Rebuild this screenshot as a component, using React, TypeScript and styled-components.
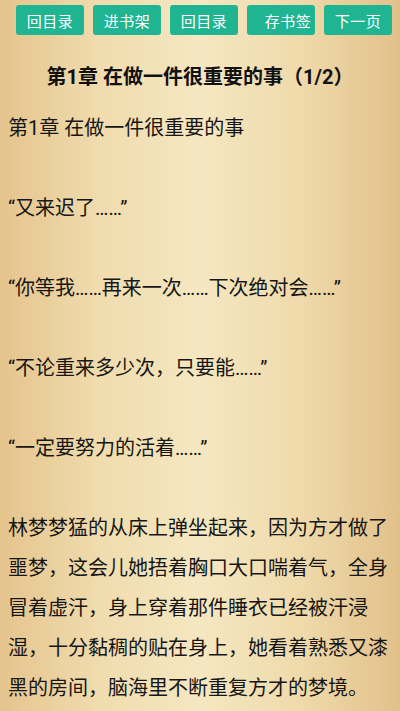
import * as React from 'react';
import styled, { createGlobalStyle } from 'styled-components';

const GlobalStyle = createGlobalStyle`
  html, body {
    margin: 0;
    padding: 0;
  }
  body {
    font-family: Roboto, "Noto Sans CJK SC", sans-serif;
    background: linear-gradient(to right, #e5c48d 0%, #f0dcae 25%, #f5e7c1 50%, #efdaab 75%, #e1c18a 100%);
    min-height: 711px;
  }
`;

const Page = styled.div`
  min-height: 711px;
  color: #161616;
`;

const Toolbar = styled.div`
  display: flex;
  gap: 9px;
  padding: 5px 0 0 16px;
`;

const NavButton = styled.div<{ $shift?: number }>`
  width: 68px;
  height: 30px;
  box-sizing: border-box;
  padding-left: ${(p) => (p.$shift ? p.$shift * 2 : 0)}px;
  display: flex;
  align-items: center;
  justify-content: center;
  background: #1fb593;
  border-radius: 3px;
  color: #fff;
  font-size: 15px;
  letter-spacing: 0.5px;
`;

const Title = styled.h1`
  margin: 0;
  padding: 22px 0 11px;
  text-align: center;
  font-size: 20px;
  line-height: 40px;
  font-weight: 700;
  color: #111;
`;

const Body = styled.div`
  padding: 0 8px;
  font-size: 20px;
  line-height: 40px;
`;

const Para = styled.p`
  margin: 0 0 40px;
`;

const buttons: { label: string; shift?: number }[] = [
  { label: '回目录' },
  { label: '进书架' },
  { label: '回目录' },
  { label: '存书签', shift: 7 },
  { label: '下一页' },
];

const paragraphs = [
  '第1章 在做一件很重要的事',
  '“又来迟了……”',
  '“你等我……再来一次……下次绝对会……”',
  '“不论重来多少次，只要能……”',
  '“一定要努力的活着……”',
  '林梦梦猛的从床上弹坐起来，因为方才做了噩梦，这会儿她捂着胸口大口喘着气，全身冒着虚汗，身上穿着那件睡衣已经被汗浸湿，十分黏稠的贴在身上，她看着熟悉又漆黑的房间，脑海里不断重复方才的梦境。',
];

export default function App() {
  return (
    <Page>
      <GlobalStyle />
      <Toolbar>
        {buttons.map((b, i) => (
          <NavButton key={i} $shift={b.shift}>
            {b.label}
          </NavButton>
        ))}
      </Toolbar>
      <Title>第1章 在做一件很重要的事（1/2）</Title>
      <Body>
        {paragraphs.map((t, i) => (
          <Para key={i}>{t}</Para>
        ))}
      </Body>
    </Page>
  );
}
